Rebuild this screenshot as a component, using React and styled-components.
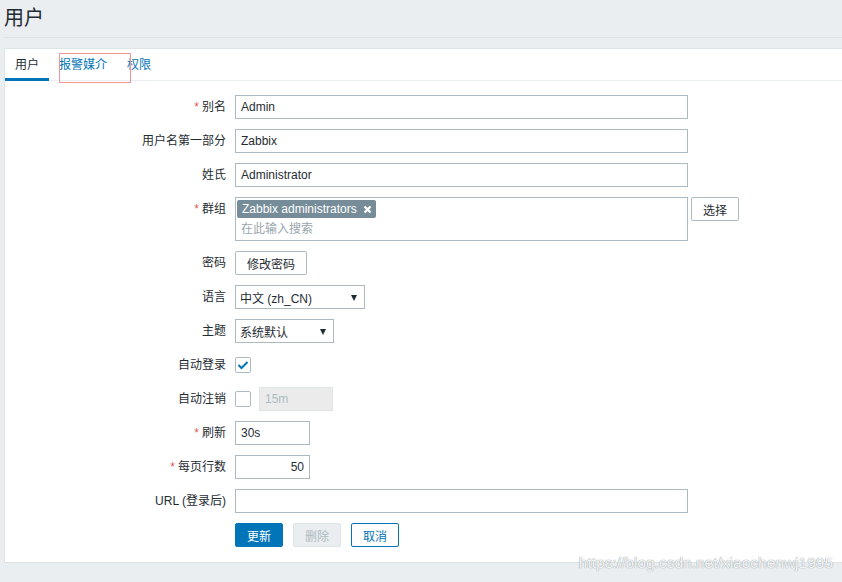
import styled, { createGlobalStyle } from 'styled-components';

const GlobalStyle = createGlobalStyle`
  html, body {
    margin: 0;
    padding: 0;
    background: #ebeef0;
    overflow: hidden;
  }
  body {
    font-family: 'Liberation Sans', Arial, 'Noto Sans CJK SC', sans-serif;
    font-size: 12px;
    color: #1f2c33;
  }
`

const Page = styled.div`
  position: relative;
  width: 842px;
  height: 582px;
  padding-left: 4px;
  box-sizing: border-box;
`

const Header = styled.div`
  height: 37px;
  border-bottom: 1px solid #dde2e5;
  display: flex;
  align-items: center;
`

const Title = styled.h1`
  margin: 0;
  font-size: 20px;
  font-weight: normal;
  line-height: 20px;
  margin-top: -1px;
  color: #1f2c33;
`

const Panel = styled.div`
  position: relative;
  margin-top: 10px;
  margin-right: -4px;
  background: #fff;
  border: 1px solid #dfe4e7;
  height: 515px;
  box-sizing: border-box;
`

const Tabs = styled.div`
  display: flex;
  border-bottom: 1px solid #ebeef0;
  height: 31px;
`

const Tab = styled.div`
  padding: 0 10px;
  line-height: 30px;
  height: 28px;
  margin-top: 1px;
  font-size: 12px;
  color: ${(props) => (props.active ? '#1f2c33' : '#0275b8')};
  border-bottom: 3px solid ${(props) => (props.active ? '#0275b8' : 'transparent')};
`

const Marker = styled.div`
  position: absolute;
  left: 54px;
  top: 4px;
  width: 70px;
  height: 28px;
  border: 1px solid #f19595;
`

const Form = styled.div`
  display: grid;
  grid-template-columns: 221px 1fr;
  column-gap: 9px;
  row-gap: 10px;
  padding-top: 14px;
`

const Label = styled.div`
  text-align: right;
  line-height: 24px;
  align-self: start;
  white-space: nowrap;
`

const Star = styled.span`
  color: #e45959;
  margin-right: 3px;
`

const Field = styled.div`
  display: flex;
  align-items: ${(props) => (props.top ? 'flex-start' : 'center')};
  gap: ${(props) => props.gap || 0}px;
  min-height: 24px;
`

const TextBox = styled.div`
  width: ${(props) => props.w}px;
  height: 24px;
  box-sizing: border-box;
  border: 1px solid #acbbc2;
  padding: 0 5px;
  line-height: 22px;
  text-align: ${(props) => (props.right ? 'right' : 'left')};
  background: ${(props) => (props.disabled ? '#ebebeb' : '#fff')};
  color: ${(props) => (props.disabled ? '#acbbc2' : '#1f2c33')};
  border-color: ${(props) => (props.disabled ? '#dfe4e7' : '#acbbc2')};
`

const MultiSelect = styled.div`
  width: 453px;
  height: 44px;
  box-sizing: border-box;
  border: 1px solid #acbbc2;
  padding: 2px 0 0 1px;
`

const Tag = styled.span`
  display: inline-flex;
  align-items: center;
  gap: 6px;
  height: 18px;
  padding: 0 4px 0 5px;
  background: #768d99;
  color: #fff;
  border-radius: 2px;
  line-height: 19px;
`

const Placeholder = styled.div`
  color: #9aa6ad;
  padding-left: 4px;
  line-height: 22px;
`

const Button = styled.button`
  width: ${(props) => props.w}px;
  height: 24px;
  box-sizing: border-box;
  font-family: inherit;
  font-size: 12px;
  border-radius: 2px;
  padding: 0;
  cursor: pointer;
  border: 1px solid #acbbc2;
  background: #fff;
  color: #1f2c33;
`

const PrimaryButton = styled(Button)`
  background: #0275b8;
  border-color: #0275b8;
  color: #fff;
`

const DisabledButton = styled(Button)`
  background: #ebeef0;
  border-color: #dfe4e7;
  color: #acbbc2;
`

const OutlineButton = styled(Button)`
  border-color: #0275b8;
  color: #0275b8;
`

const Select = styled.div`
  width: ${(props) => props.w}px;
  height: 24px;
  box-sizing: border-box;
  border: 1px solid #acbbc2;
  display: flex;
  align-items: center;
  justify-content: space-between;
  padding: 0 7px 0 4px;
`

const Arrow = styled.span`
  width: 0;
  height: 0;
  border-left: 3.5px solid transparent;
  border-right: 3.5px solid transparent;
  border-top: 6px solid #1f2c33;
  margin-top: 1px;
`

const Check = styled.div`
  width: 16px;
  height: 16px;
  box-sizing: border-box;
  border: 1px solid #acbbc2;
  border-radius: 2px;
  display: flex;
  align-items: center;
  justify-content: center;
`

const Watermark = styled.div`
  position: absolute;
  right: 9px;
  bottom: 10px;
  font-size: 15.5px;
  color: rgba(255, 255, 255, 0.9);
  text-shadow: 0 0 1px #9aa4aa, 0 0 1px #9aa4aa;
`

const Req = ({ children }) => (
  <Label>
    <Star>*</Star>
    {children}
  </Label>
)

const App = () => {
  return (
    <Page>
      <GlobalStyle />
      <Header>
        <Title>用户</Title>
      </Header>
      <Panel>
        <Tabs>
          <Tab active>用户</Tab>
          <Tab>报警媒介</Tab>
          <Tab>权限</Tab>
        </Tabs>
        <Marker />
        <Form>
          <Req>别名</Req>
          <Field>
            <TextBox w={453}>Admin</TextBox>
          </Field>

          <Label>用户名第一部分</Label>
          <Field>
            <TextBox w={453}>Zabbix</TextBox>
          </Field>

          <Label>姓氏</Label>
          <Field>
            <TextBox w={453}>Administrator</TextBox>
          </Field>

          <Req>群组</Req>
          <Field top gap={3}>
            <MultiSelect>
              <Tag>
                Zabbix administrators
                <svg width="9" height="9" viewBox="0 0 9 9">
                  <path d="M1.5 1.5 L7.5 7.5 M7.5 1.5 L1.5 7.5" stroke="#fff" strokeWidth="2.4" />
                </svg>
              </Tag>
              <Placeholder>在此输入搜索</Placeholder>
            </MultiSelect>
            <Button w={48}>选择</Button>
          </Field>

          <Label>密码</Label>
          <Field>
            <Button w={72}>修改密码</Button>
          </Field>

          <Label>语言</Label>
          <Field>
            <Select w={130}>
              <span>中文 (zh_CN)</span>
              <Arrow />
            </Select>
          </Field>

          <Label>主题</Label>
          <Field>
            <Select w={99}>
              <span>系统默认</span>
              <Arrow />
            </Select>
          </Field>

          <Label>自动登录</Label>
          <Field>
            <Check>
              <svg width="12" height="10" viewBox="0 0 12 10">
                <path d="M1.5 5 L4.5 8 L10.5 2" fill="none" stroke="#0275b8" strokeWidth="2" />
              </svg>
            </Check>
          </Field>

          <Label>自动注销</Label>
          <Field gap={8}>
            <Check />
            <TextBox w={74} disabled>15m</TextBox>
          </Field>

          <Req>刷新</Req>
          <Field>
            <TextBox w={75}>30s</TextBox>
          </Field>

          <Req>每页行数</Req>
          <Field>
            <TextBox w={75} right>50</TextBox>
          </Field>

          <Label>URL (登录后)</Label>
          <Field>
            <TextBox w={453} />
          </Field>

          <div />
          <Field gap={10}>
            <PrimaryButton w={48}>更新</PrimaryButton>
            <DisabledButton w={48}>删除</DisabledButton>
            <OutlineButton w={48}>取消</OutlineButton>
          </Field>
        </Form>
      </Panel>
      <Watermark>https://blog.csdn.net/xiaochenwj1995</Watermark>
    </Page>
  )
}

export default App
